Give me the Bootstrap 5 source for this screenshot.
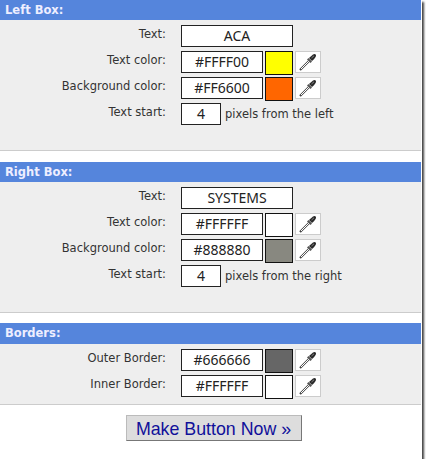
<!DOCTYPE html>
<html lang="en">
<head>
<meta charset="utf-8">
<title>Make Button</title>
<link rel="stylesheet" href="https://cdn.jsdelivr.net/npm/bootstrap@5.3.0/dist/css/bootstrap.min.css">
<style>
body { background: #fff; margin: 0; overflow: hidden; font-family: "DejaVu Sans", Verdana, sans-serif; font-size: 11.5px; color: #333; }
.sheet { width: 422px; height: 459px; padding-right: 1px; background: #fff; box-shadow: 2px 2px 2px #444; }
.sec-head { height: 20px; line-height: 21px; background: #5585dc; color: #eef; font-weight: 700; font-size: 11.5px; padding-left: 5px; }
.sec-tall { height: 21px; }
.sec-body { background: #eee; border-bottom: 1px solid #ccc; padding-top: 5px; }
.sec-left { height: 131px; margin-bottom: 11px; }
.sec-right { height: 131px; margin-bottom: 10px; }
.sec-bord { height: 61px; margin-bottom: 10px; }
.form-line { height: 26px; display: flex; gap: 15px; }
.lbl { width: 166px; text-align: right; line-height: 19px; flex: none; }
.field { display: flex; height: 21px; }
.val { background: #fff; border: 1px solid #222; color: #222; text-align: center; font-family: "Noto Sans", Tahoma, sans-serif; font-size: 14px; line-height: 20px; height: 21.5px; }
.w-wide { width: 112px; }
.w-hex { width: 82px; }
.w-num { width: 40px; }
.swatch { width: 28px; height: 24px; margin-left: 2px; border: 1px solid #111; }
.dropper { width: 26px; height: 22px; margin-left: 2px; background: #fff; border: 1px solid #ccc; display: flex; align-items: center; justify-content: center; }
.unit { margin-left: 4px; line-height: 22px; }
.btn-wrap { padding-left: 6px; }
.make-btn { width: 176px; height: 26px; background: #ddd; border: 1px solid #bbb; border-right-color: #777; border-bottom-color: #777; font-family: "Liberation Sans", Arial, sans-serif; font-size: 17.8px; line-height: 26px; padding: 0; border-radius: 0; color: #10109a; }
.make-btn:hover { background: #ddd; color: #10109a; }
</style>
</head>
<body>
<svg width="0" height="0" class="d-block">
<symbol id="dropper" viewBox="0 0 18 18">
<path d="M1 17 L10 8" stroke="#444" stroke-width="2.2" fill="none"/>
<path d="M2 16 L10 8" stroke="#fff" stroke-width="1" fill="none"/>
<path d="M8 6.5 L11.5 10 L13 8.5 L9.5 5 Z" fill="#555"/>
<path d="M10 5 L14 1.5 Q16 .5 17 2 Q17.5 4 13 8 Z" fill="#2a2a2a"/>
<path d="M12.5 5 L15 2.8" stroke="#999" stroke-width=".8" fill="none"/>
</symbol>
</svg>
<div class="sheet">
  <div class="sec-head">Left Box:</div>
  <div class="sec-body sec-left">
    <div class="form-line"><div class="lbl">Text:</div><div class="field"><div class="val w-wide">ACA</div></div></div>
    <div class="form-line"><div class="lbl">Text color:</div><div class="field"><div class="val w-hex">#FFFF00</div><div class="swatch" style="background:#ffff00"></div><div class="dropper"><svg width="18" height="18"><use href="#dropper"/></svg></div></div></div>
    <div class="form-line"><div class="lbl">Background color:</div><div class="field"><div class="val w-hex">#FF6600</div><div class="swatch" style="background:#ff6600"></div><div class="dropper"><svg width="18" height="18"><use href="#dropper"/></svg></div></div></div>
    <div class="form-line"><div class="lbl">Text start:</div><div class="field"><div class="val w-num">4</div><div class="unit">pixels from the left</div></div></div>
  </div>
  <div class="sec-head">Right Box:</div>
  <div class="sec-body sec-right">
    <div class="form-line"><div class="lbl">Text:</div><div class="field"><div class="val w-wide">SYSTEMS</div></div></div>
    <div class="form-line"><div class="lbl">Text color:</div><div class="field"><div class="val w-hex">#FFFFFF</div><div class="swatch" style="background:#ffffff"></div><div class="dropper"><svg width="18" height="18"><use href="#dropper"/></svg></div></div></div>
    <div class="form-line"><div class="lbl">Background color:</div><div class="field"><div class="val w-hex">#888880</div><div class="swatch" style="background:#888880"></div><div class="dropper"><svg width="18" height="18"><use href="#dropper"/></svg></div></div></div>
    <div class="form-line"><div class="lbl">Text start:</div><div class="field"><div class="val w-num">4</div><div class="unit">pixels from the right</div></div></div>
  </div>
  <div class="sec-head sec-tall">Borders:</div>
  <div class="sec-body sec-bord">
    <div class="form-line"><div class="lbl">Outer Border:</div><div class="field"><div class="val w-hex">#666666</div><div class="swatch" style="background:#666666"></div><div class="dropper"><svg width="18" height="18"><use href="#dropper"/></svg></div></div></div>
    <div class="form-line"><div class="lbl">Inner Border:</div><div class="field"><div class="val w-hex">#FFFFFF</div><div class="swatch" style="background:#ffffff"></div><div class="dropper"><svg width="18" height="18"><use href="#dropper"/></svg></div></div></div>
  </div>
  <div class="d-flex justify-content-center btn-wrap"><button type="button" class="btn make-btn">Make Button Now »</button></div>
</div>
<script src="https://cdn.jsdelivr.net/npm/bootstrap@5.3.0/dist/js/bootstrap.bundle.min.js"></script>
</body>
</html>
